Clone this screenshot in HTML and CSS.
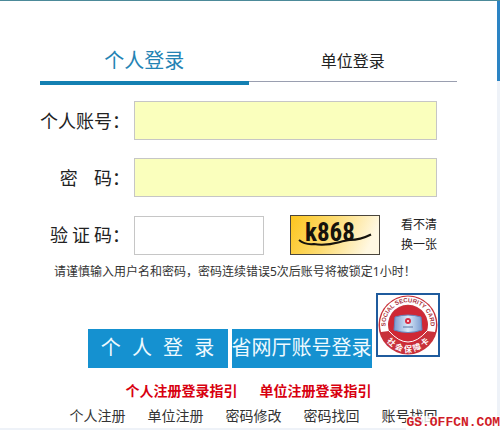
FILE: index.html
```html
<!DOCTYPE html>
<html lang="zh-CN">
<head>
<meta charset="utf-8">
<meta name="viewport" content="width=device-width, initial-scale=1">
<title>个人登录</title>
<link rel="stylesheet" href="styles.css">
</head>
<body>
<div class="page">
  <main class="panel">
    <nav class="tabs">
      <a class="tab tab-active" href="#personal"><span>个人登录</span></a>
      <a class="tab" href="#company"><span>单位登录</span></a>
    </nav>
    <form class="form">
      <div class="row">
        <label class="label" for="account">个人账号：</label>
        <input class="field filled" id="account" type="text">
      </div>
      <div class="row">
        <label class="label" for="password">密&nbsp;&nbsp;&nbsp;&nbsp;码：</label>
        <input class="field filled" id="password" type="password">
      </div>
      <div class="row">
        <label class="label" for="captcha">验 证 码：</label>
        <div class="captcha">
          <input class="field" id="captcha" type="text">
          <svg class="captcha-image" viewBox="0 0 90 40" role="img" aria-label="k868">
            <defs>
              <linearGradient id="gold" x1="0" y1="0" x2="1" y2="0.2">
                <stop offset="0" stop-color="#fcc51c"/>
                <stop offset="0.5" stop-color="#fddc73"/>
                <stop offset="1" stop-color="#fff8e2"/>
              </linearGradient>
            </defs>
            <rect x="0.5" y="0.5" width="89" height="39" fill="url(#gold)" stroke="#4a453c"/>
            <text class="captcha-text" x="15" y="26">k868</text>
            <path d="M9 25 Q15 30 24 29 C40 32 49 26 60 25 Q70 25 81 19.500" fill="none" stroke="#15120c" stroke-width="2"/>
          </svg>
          <a class="refresh" href="#refresh">看不清<br>换一张</a>
        </div>
      </div>
      <p class="hint">请谨慎输入用户名和密码，密码连续错误5次后账号将被锁定1小时！</p>
      <div class="actions">
        <button class="button" type="submit">个&nbsp;&nbsp;人&nbsp;&nbsp;登&nbsp;&nbsp;录</button>
        <button class="button" type="button">省网厅账号登录</button>
        <a class="card-link" href="#card" aria-label="社会保障卡">
          <svg class="card-logo" viewBox="0 0 64 64">
            <defs>
              <path id="upper" d="M12.500 43 A22.500 22.500 0 1 1 51.500 43"/>
              <path id="lower" d="M5.500 37 A27 27 0 0 0 58.500 37"/>
              <linearGradient id="chip" x1="0" y1="0" x2="1" y2="0">
                <stop offset="0" stop-color="#7b9bd0"/>
                <stop offset="0.5" stop-color="#dceaf8"/>
                <stop offset="1" stop-color="#789bd1"/>
              </linearGradient>
            </defs>
            <rect x="1" y="1" width="62" height="62" fill="#fff" stroke="#1f5b9d" stroke-width="2"/>
            <circle cx="32" cy="32" r="29.500" fill="#c8323b"/>
            <path d="M5 39 A28 28 0 1 1 59 39 L51 38 A20 20 0 1 0 13 38 Z" fill="#fff"/>
            <circle cx="32" cy="32" r="19" fill="#cf2835"/>
            <path d="M13 38 Q32 60 51 38" fill="none" stroke="#fff" stroke-width="1"/>
            <path d="M19 24 Q32 20 45 24 L46 37 Q32 42 18 37 Z" fill="url(#chip)" stroke="#6485bd"/>
            <circle cx="32" cy="28" r="3" fill="#d92c43"/>
            <circle cx="32" cy="28" r="1" fill="#fff"/>
            <path d="M27 34 H37" stroke="#5674a5" stroke-width="1"/>
            <text class="seal-latin"><textPath href="#upper" startOffset="50%">SOCIAL SECURITY CARD</textPath></text>
            <text class="seal-cjk"><textPath href="#lower" startOffset="50%">社 会 保 障 卡</textPath></text>
          </svg>
        </a>
      </div>
    </form>
    <div class="guides">
      <a href="#guide-personal">个人注册登录指引</a>
      <a href="#guide-company">单位注册登录指引</a>
    </div>
    <div class="links">
      <a href="#r1">个人注册</a>
      <a href="#r2">单位注册</a>
      <a href="#r3">密码修改</a>
      <a href="#r4">密码找回</a>
      <a href="#r5">账号找回</a>
    </div>
  </main>
  <aside class="rail"></aside>
  <div class="watermark">GS.OFFCN.COM</div>
</div>
</body>
</html>
```
FILE: styles.css
```css
* {
  box-sizing: border-box;
}

body {
  margin: 0;
  background: #eef2f8;
  color: #222;
  font-family: "Noto Sans", "Noto Sans CJK SC", sans-serif;
}

a {
  color: inherit;
  text-decoration: none;
}

.page {
  position: relative;
  display: flex;
  border-top: 1px solid #4c8a99;
  padding-bottom: 2px;
}

.panel {
  flex: 1;
  padding: 40px 40px 0;
  background: #fff;
}

.rail {
  width: 3px;
  height: 80px;
  background: #2c84c4;
}

.tabs {
  display: grid;
  grid-template-columns: 1fr 1fr;
}

.tab {
  display: flex;
  flex-direction: column;
  height: 43px;
  padding-bottom: 2px;
  font-size: 16px;
  line-height: 40px;
  text-align: center;
}

.tab::after {
  content: "";
  border-bottom: 1px solid #9a9fb0;
}

.tab-active {
  padding-bottom: 0;
  color: #2483b4;
  font-size: 20px;
}

.tab-active::after {
  border-bottom: 4px solid #1480b2;
}

.form {
  display: flex;
  flex-direction: column;
  gap: 18px;
  padding-top: 17px;
}

.row {
  display: grid;
  grid-template-columns: 90px 1fr;
  column-gap: 4px;
  align-items: center;
  padding-right: 20px;
}

.label {
  font-family: "Noto Sans CJK SC", sans-serif;
  font-size: 18px;
  line-height: 39px;
  text-align: right;
  white-space: nowrap;
}

.field {
  width: 100%;
  height: 39px;
  padding: 0 8px;
  border: 1px solid #c6c6c6;
  background: #fff;
  font-size: 16px;
}

.filled {
  background: #faffbd;
}

.captcha {
  display: grid;
  grid-template-columns: 1fr 90px 57px;
  align-items: center;
  height: 39px;
}

.captcha-image {
  display: block;
  width: 90px;
  height: 40px;
}

.captcha .field {
  width: auto;
  min-width: 0;
  margin-right: 26px;
}

.captcha-text {
  fill: #15120c;
  font-family: "Liberation Sans Narrow", "Roboto Condensed", "Liberation Sans", sans-serif;
  font-size: 25px;
  font-weight: bold;
}

.refresh {
  justify-self: end;
  font-size: 12px;
  line-height: 20px;
  white-space: nowrap;
}

.hint {
  margin: -8px 0 0 14px;
  color: #333;
  font-size: 12px;
  line-height: 16px;
}

.actions {
  display: flex;
  justify-content: center;
  align-items: flex-end;
  gap: 4px;
  margin-top: -5px;
  padding-left: 30px;
}

.button {
  width: 140px;
  height: 39px;
  margin-top: 36px;
  padding: 0;
  border: 0;
  background: #1591d0;
  color: #eefaff;
  font-family: "Liberation Sans", "Noto Sans CJK SC", sans-serif;
  font-size: 20px;
  line-height: 39px;
  white-space: nowrap;
}

.card-link {
  align-self: flex-start;
}

.card-logo {
  display: block;
  width: 64px;
  height: 64px;
}

.seal-latin,
.seal-cjk {
  font-family: "Liberation Sans", "Noto Sans CJK SC", sans-serif;
  font-weight: bold;
  text-anchor: middle;
}

.seal-latin {
  fill: #ab3440;
  font-size: 6px;
}

.seal-cjk {
  fill: #fff;
  font-size: 8px;
}

.guides,
.links {
  display: flex;
  justify-content: center;
  gap: 22px;
  font-size: 14px;
  white-space: nowrap;
}

.guides {
  padding-top: 13px;
  color: #d8000f;
  font-weight: bold;
  line-height: 20px;
}

.links {
  padding: 5px 0 2px 10px;
  color: #333;
  line-height: 20px;
}

.watermark {
  position: absolute;
  right: 0;
  bottom: 0;
  background: rgba(255, 255, 255, 0.8);
  color: #d01c28;
  font-family: "Liberation Mono", monospace;
  font-size: 13px;
  font-weight: bold;
  line-height: 14px;
}
```
